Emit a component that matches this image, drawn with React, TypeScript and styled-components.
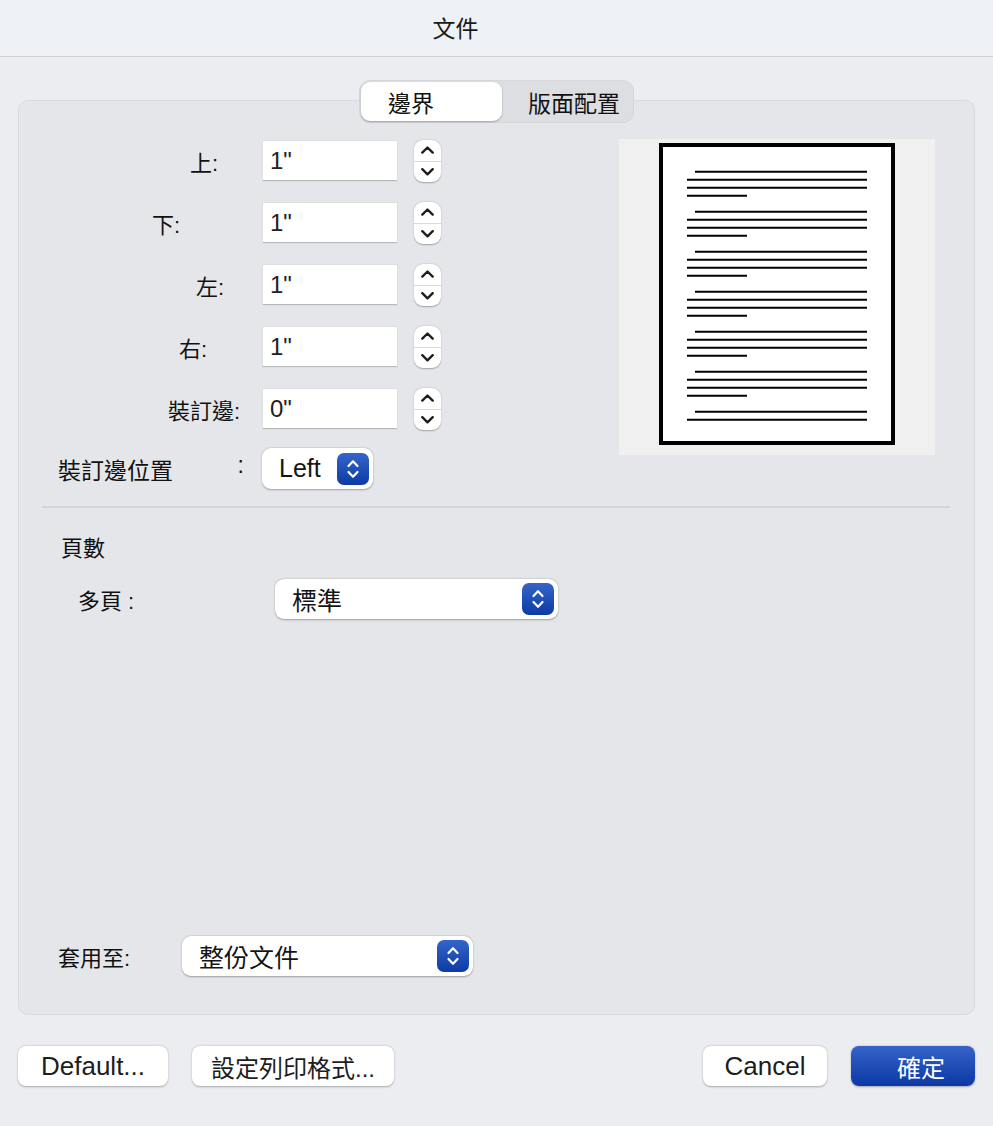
import React from "react";
import styled, { createGlobalStyle } from "styled-components";

const FONT = `"Liberation Sans", "Noto Sans CJK TC", sans-serif`;

const Global = createGlobalStyle`
  html, body { margin: 0; padding: 0; background: #ecedf1; }
  body { font-family: ${FONT}; color: #1a1a1a; }
  * { box-sizing: border-box; }
`;

const Window = styled.div`
  width: 993px;
  height: 1126px;
  background: #ecedf1;
  display: flex;
  flex-direction: column;
`;

const TitleBar = styled.div`
  height: 57px;
  flex: none;
  background: #eef1f5;
  border-bottom: 1px solid #cdcfd3;
  display: flex;
  align-items: center;
  justify-content: center;
  padding-right: 82px;
  padding-bottom: 2px;
  font-size: 23px;
  color: #1a1a1a;
`;

const Body = styled.div`
  display: flex;
  flex-direction: column;
  padding: 0 18px;
`;

const TabWrap = styled.div`
  position: relative;
  z-index: 1;
  margin-top: 23px;
  align-self: center;
  display: flex;
  width: 275px;
  height: 43px;
  padding: 1px;
  border-radius: 11px;
  background: #dddee1;
  border: 1px solid #d6d7da;
`;

const Tab = styled.div<{ $active?: boolean; $w: number; $pad: number }>`
  width: ${(p) => p.$w}px;
  height: 100%;
  display: flex;
  align-items: center;
  padding-left: ${(p) => p.$pad}px;
  font-size: 23px;
  color: #111;
  border-radius: 9px;
  background: ${(p) => (p.$active ? "#ffffff" : "transparent")};
  box-shadow: ${(p) => (p.$active ? "0 1px 2px rgba(0,0,0,0.28)" : "none")};
`;

const Panel = styled.div`
  margin-top: -23px;
  height: 915px;
  background: #e5e6e9;
  border: 1px solid #d9dadd;
  border-radius: 10px;
  padding: 40px 24px 38px 23px;
  display: flex;
  flex-direction: column;
`;

const TopSection = styled.div`
  display: flex;
  justify-content: space-between;
  align-items: flex-start;
`;

const FormColumn = styled.div`
  display: flex;
  flex-direction: column;
  gap: 22px;
`;

const FieldRow = styled.div`
  display: flex;
  align-items: center;
  height: 40px;
`;

const FieldLabel = styled.div<{ $pr: number }>`
  width: 202px;
  margin-right: 19px;
  text-align: right;
  padding-right: ${(p) => p.$pr}px;
  font-size: 22px;
  color: #111;
`;

const TextInput = styled.div`
  width: 134px;
  height: 40px;
  background: #fff;
  border-bottom: 1.5px solid #b9babd;
  box-shadow: 0 0 0 0.5px #d4d5d8;
  display: flex;
  align-items: center;
  padding-left: 7px;
  font-size: 24px;
  color: #222;
`;

const Stepper = styled.div`
  margin-left: 17px;
  width: 27px;
  height: 42px;
  background: #fff;
  border-radius: 9px;
  box-shadow: 0 0.5px 1.5px rgba(0,0,0,0.3);
  display: flex;
  flex-direction: column;
`;

const StepHalf = styled.div<{ $top?: boolean }>`
  flex: 1;
  display: flex;
  align-items: center;
  justify-content: center;
  border-bottom: ${(p) => (p.$top ? "1px solid #d8d8da" : "none")};
`;

const SelectRow = styled.div<{ $mt?: number }>`
  display: flex;
  align-items: center;
  margin-top: ${(p) => p.$mt ?? 0}px;
`;

const PlainLabel = styled.div<{ $w: number; $pl: number }>`
  width: ${(p) => p.$w}px;
  padding-left: ${(p) => p.$pl}px;
  font-size: 22px;
  color: #111;
  display: flex;
  justify-content: space-between;
  flex: none;
`;

const Select = styled.div<{ $w: number; $h: number; $fs: number }>`
  width: ${(p) => p.$w}px;
  height: ${(p) => p.$h}px;
  background: #fff;
  border-radius: 9px;
  box-shadow: 0 0.5px 2px rgba(0,0,0,0.32);
  display: flex;
  align-items: center;
  justify-content: space-between;
  padding: 0 4px 0 17px;
  font-size: ${(p) => p.$fs}px;
  color: #151515;
`;

const SelectArrow = styled.div`
  width: 32px;
  height: 32px;
  border-radius: 7px;
  background: linear-gradient(#3564c9, #0c3ba6);
  display: flex;
  align-items: center;
  justify-content: center;
`;

const Preview = styled.div`
  margin-top: -2px;
  margin-right: 15px;
  width: 316px;
  height: 316px;
  background: #f0f0f0;
  flex: none;
`;

const Separator = styled.div`
  margin-top: 17px;
  height: 2px;
  background: #d3d4d7;
`;

const SectionHeading = styled.div`
  margin-top: 26px;
  padding-left: 19px;
  font-size: 22px;
  line-height: 30px;
  color: #111;
`;

const Spacer = styled.div`
  flex: 1;
`;

const Footer = styled.div`
  margin-top: 31px;
  display: flex;
  align-items: center;
  gap: 24px;
`;

const Button = styled.div<{ $w: number; $fs: number; $primary?: boolean }>`
  width: ${(p) => p.$w}px;
  height: 40px;
  border-radius: 8px;
  display: flex;
  align-items: center;
  justify-content: center;
  padding-left: ${(p) => (p.$primary ? 16 : 0)}px;
  font-size: ${(p) => p.$fs}px;
  color: ${(p) => (p.$primary ? "#fff" : "#1d1d1d")};
  background: ${(p) => (p.$primary ? "linear-gradient(#3563c8, #0a39a6)" : "#fff")};
  box-shadow: 0 0.5px 2px rgba(0,0,0,0.3);
`;

const Push = styled.div`
  flex: 1;
`;

const Chevron = ({ up, color, w = 12 }: { up?: boolean; color: string; w?: number }) => (
  <svg width={w} height={w * 0.6} viewBox="0 0 12 7" fill="none">
    <path
      d={up ? "M1.2 6 L6 1.3 L10.8 6" : "M1.2 1 L6 5.7 L10.8 1"}
      stroke={color}
      strokeWidth={2.2}
      strokeLinecap="round"
      strokeLinejoin="round"
    />
  </svg>
);

const StepperControl = () => (
  <Stepper>
    <StepHalf $top>
      <Chevron up color="#1f1f1f" w={13} />
    </StepHalf>
    <StepHalf>
      <Chevron color="#1f1f1f" w={13} />
    </StepHalf>
  </Stepper>
);

const ArrowIcon = () => (
  <SelectArrow>
    <svg width="14" height="22" viewBox="0 0 14 22" fill="none">
      <path d="M2.5 8 L7 3.2 L11.5 8" stroke="#fff" strokeWidth={2.2} strokeLinecap="round" strokeLinejoin="round" />
      <path d="M2.5 14 L7 18.8 L11.5 14" stroke="#fff" strokeWidth={2.2} strokeLinecap="round" strokeLinejoin="round" />
    </svg>
  </SelectArrow>
);

const PagePreview = () => {
  const lines: { x1: number; x2: number; y: number }[] = [];
  for (let g = 0; g < 7; g++) {
    const base = 32.7 + g * 40;
    lines.push({ x1: 76, x2: 248, y: base });
    lines.push({ x1: 68, x2: 248, y: base + 8 });
    if (g < 6) {
      lines.push({ x1: 68, x2: 248, y: base + 16 });
      lines.push({ x1: 68, x2: 128, y: base + 24 });
    }
  }
  return (
    <Preview>
      <svg width="316" height="316" viewBox="0 0 316 316">
        <rect x="42" y="6" width="232" height="298" fill="#fff" stroke="#000" strokeWidth="4" />
        {lines.map((l, i) => (
          <line key={i} x1={l.x1} x2={l.x2} y1={l.y} y2={l.y} stroke="#000" strokeWidth="2" />
        ))}
      </svg>
    </Preview>
  );
};

const fields = [
  { label: "上:", pr: 26, value: '1"' },
  { label: "下:", pr: 64, value: '1"' },
  { label: "左:", pr: 20, value: '1"' },
  { label: "右:", pr: 37, value: '1"' },
  { label: "裝訂邊:", pr: 4, value: '0"' },
];

export default function App() {
  return (
    <Window>
      <Global />
      <TitleBar>文件</TitleBar>
      <Body>
        <TabWrap>
          <Tab $active $w={142} $pad={27}>邊界</Tab>
          <Tab $w={131} $pad={26}>版面配置</Tab>
        </TabWrap>
        <Panel>
          <TopSection>
            <FormColumn>
              {fields.map((f) => (
                <FieldRow key={f.label}>
                  <FieldLabel $pr={f.pr}>{f.label}</FieldLabel>
                  <TextInput>{f.value}</TextInput>
                  <StepperControl />
                </FieldRow>
              ))}
              <SelectRow $mt={-3}>
                <PlainLabel $w={202} $pl={16} style={{ fontSize: 23 }}>
                  <span>裝訂邊位置</span>
                  <span>:</span>
                </PlainLabel>
                <Select $w={111} $h={41} $fs={25} style={{ marginLeft: 18 }}>
                  <span>Left</span>
                  <ArrowIcon />
                </Select>
              </SelectRow>
            </FormColumn>
            <PagePreview />
          </TopSection>
          <Separator />
          <SectionHeading>頁數</SectionHeading>
          <SelectRow $mt={15}>
            <PlainLabel $w={233} $pl={36}>
              <span>多頁 :</span>
            </PlainLabel>
            <Select $w={283} $h={40} $fs={25}>
              <span>標準</span>
              <ArrowIcon />
            </Select>
          </SelectRow>
          <Spacer />
          <SelectRow>
            <PlainLabel $w={140} $pl={16}>
              <span>套用至:</span>
            </PlainLabel>
            <Select $w={291} $h={40} $fs={25}>
              <span>整份文件</span>
              <ArrowIcon />
            </Select>
          </SelectRow>
        </Panel>
        <Footer>
          <Button $w={150} $fs={26}>Default...</Button>
          <Button $w={202} $fs={24}>設定列印格式...</Button>
          <Push />
          <Button $w={124} $fs={26}>Cancel</Button>
          <Button $w={124} $fs={24} $primary>確定</Button>
        </Footer>
      </Body>
    </Window>
  );
}
